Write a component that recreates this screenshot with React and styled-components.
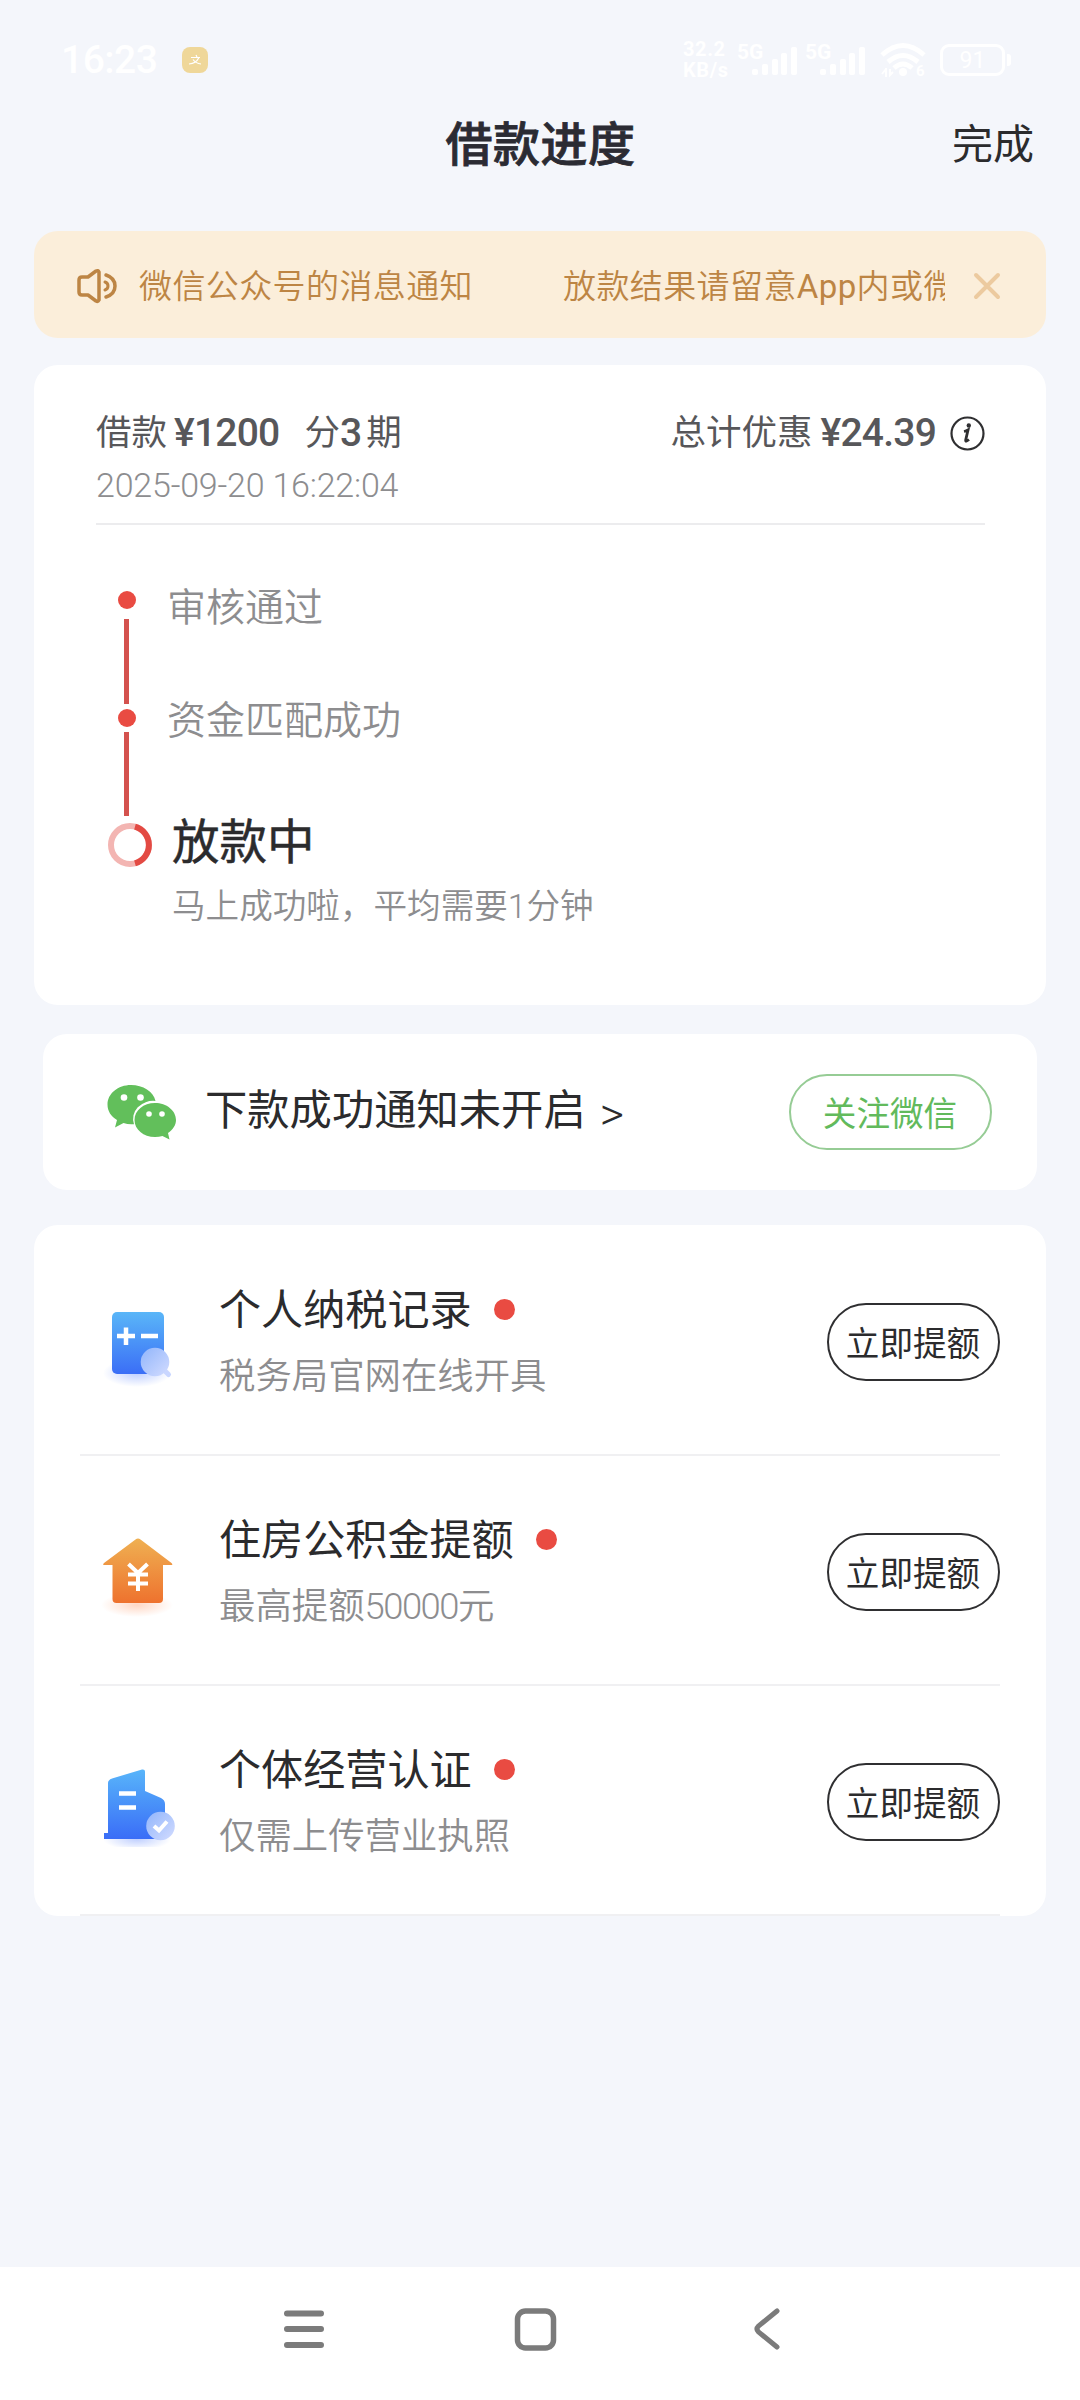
import styled, { createGlobalStyle } from "styled-components";

const GlobalStyle = createGlobalStyle`
  * {
    box-sizing: border-box;
  }

  body {
    margin: 0;
    background: #f4f6fb;
    font-family: Roboto, "Noto Sans CJK SC", sans-serif;
    color: #2b2b2d;
  }
`;

// ========== PAGE ==========
const Page = styled.div`
  width: 1080px;
  height: 2400px;
  display: flex;
  flex-direction: column;
  overflow: hidden;
`;

const Content = styled.main`
  flex: 1;
  padding: 0 34px;
`;

// ========== STATUS BAR ==========
const StatusBar = styled.div`
  height: 104px;
  padding: 16px 69px 0 61px;
  display: flex;
  align-items: center;
  justify-content: space-between;
  color: #ffffff;
`;

const StatusGroup = styled.div`
  display: flex;
  align-items: center;
`;

const Time = styled.span`
  width: 121px;
  font-size: 39px;
  font-weight: 500;
  letter-spacing: -0.5px;
`;

const Speed = styled.div`
  width: 54px;
  display: flex;
  flex-direction: column;
  font-size: 20px;
  font-weight: 700;
  letter-spacing: 0.6px;
  line-height: 21px;
`;

const Signal = styled.div`
  width: ${({ $width }) => $width}px;
  height: 34px;
  display: flex;
  align-items: flex-start;
  font-size: 21px;
  font-weight: 700;
  line-height: 18px;

  svg {
    margin: 4px 0 0 -11px;
  }
`;

const WifiIcon = styled.svg`
  overflow: visible;
`;

const Battery = styled.div`
  width: 65px;
  height: 32px;
  margin-left: 14px;
  border: 3px solid #ffffff;
  border-radius: 9px;
  font-size: 23px;
  line-height: 27px;
  text-align: center;
`;

const BatteryTip = styled.span`
  width: 4px;
  height: 12px;
  margin-left: 2px;
  border-radius: 0 3px 3px 0;
  background: #ffffff;
`;

// ========== HEADER ==========
const Header = styled.header`
  height: 127px;
  padding: 13px 46px 0 45px;
  display: grid;
  grid-template-columns: 1fr auto 1fr;
  align-items: start;
  line-height: 56px;

  h1 {
    margin: 0 -2px 0 0;
    font-size: 47px;
    font-weight: 500;
    letter-spacing: 0.5px;
    -webkit-text-stroke: 0.8px #2b2b33;
    color: #2b2b33;
  }
`;

const DoneLink = styled.span`
  justify-self: end;
  font-size: 41px;
`;

// ========== NOTICE ==========
const Notice = styled.section`
  height: 107px;
  padding: 3px 45px 0 42px;
  display: flex;
  align-items: center;
  border-radius: 24px;
  background: #fbeeda;
  color: #bd8544;
`;

const Marquee = styled.div`
  width: 806px;
  margin: 0 auto 0 21px;
  padding-top: 2px;
  display: flex;
  gap: 90px;
  overflow: hidden;
  white-space: nowrap;
  font-size: 33px;
  font-weight: 350;
  letter-spacing: 0.4px;
  line-height: 48px;

  em {
    font-style: normal;
    font-weight: 400;
  }
`;

// ========== CARDS ==========
const Card = styled.section`
  border-radius: 24px;
  background: #ffffff;
`;

const ProgressCard = styled(Card)`
  height: 640px;
  margin-top: 27px;
  padding: 42px 61px 0 62px;
`;

const Summary = styled.div`
  display: flex;
  justify-content: space-between;
  font-size: 35.5px;
  line-height: 52px;
  color: #57575a;
`;

const SummaryItem = styled.div`
  display: flex;
  align-items: center;
  white-space: pre;
`;

const Num = styled.b`
  margin: 0 ${({ $right }) => $right || 0}px 0 ${({ $left }) => $left || 0}px;
  font-size: 39px;
  font-weight: 500;
  letter-spacing: -0.8px;
`;

const LoanDate = styled.div`
  height: 66px;
  padding-top: 6px;
  border-bottom: 2px solid #ececee;
  font-size: 34px;
  font-weight: 300;
  letter-spacing: -0.2px;
  line-height: 40px;
  color: #8d8d8f;
`;

// ========== TIMELINE ==========
const Timeline = styled.div`
  padding-top: 66px;
`;

const Step = styled.div`
  display: grid;
  grid-template-columns: 61px 1fr;
  column-gap: 10px;
`;

const Rail = styled.div`
  display: flex;
  flex-direction: column;
  align-items: center;
`;

const Dot = styled.span`
  width: ${({ $size }) => $size}px;
  height: ${({ $size }) => $size}px;
  border-radius: 50%;
  background: #e94b42;
`;

const Line = styled.span`
  width: 5px;
  height: ${({ $height }) => $height}px;
  margin: ${({ $top }) => $top}px 0 ${({ $bottom }) => $bottom}px;
  background: #d4524e;
`;

const Ring = styled.svg`
  margin-left: 6px;
`;

const StepLabel = styled.div`
  margin-top: ${({ $shift }) => $shift}px;
  font-size: 39px;
  line-height: 48px;
  font-weight: 350;
  color: #8d8d8f;
`;

const CurrentStep = styled.div`
  margin: -8px 0 0 5px;

  strong {
    display: block;
    font-size: 47.5px;
    font-weight: 400;
    line-height: 56px;
    -webkit-text-stroke: 0.5px #2b2b2d;
  }

  p {
    margin: 14px 0 0;
    font-size: 33.6px;
    font-weight: 350;
    line-height: 44px;
    color: #8d8d8f;
  }
`;

// ========== WECHAT ==========
const WechatCard = styled(Card)`
  height: 156px;
  margin: 29px 9px 35px;
  padding: 0 45px 0 64px;
  display: flex;
  align-items: center;
`;

const WechatText = styled.div`
  margin-left: 28px;
  flex: 1;
  display: flex;
  font-size: 42.3px;
  line-height: 58px;

  span {
    margin-left: 14px;
    padding-top: 3px;
    font-size: 47px;
    font-weight: 300;
  }
`;

const Pill = styled.button`
  width: ${({ $green }) => ($green ? 203 : 173)}px;
  height: ${({ $green }) => ($green ? 76 : 78)}px;
  padding: 0 1px 1px 0;
  border: 2px solid ${({ $green }) => ($green ? "#96cc95" : "#2f2f31")};
  border-radius: 39px;
  background: transparent;
  font-family: inherit;
  font-size: 33.6px;
  color: ${({ $green }) => ($green ? "#62ba5c" : "#2b2b2d")};
`;

// ========== OFFERS ==========
const Offers = styled(Card)`
  height: 691px;
  padding-top: 1px;
`;

const Offer = styled.div`
  height: 230px;
  margin: 0 46px;
  padding: 3px 0 0 20px;
  display: flex;
  align-items: center;
  border-bottom: 2px solid #f0f0f2;
`;

const OfferText = styled.div`
  flex: 1;
  margin-left: 39px;

  h3 {
    margin: 0;
    display: flex;
    align-items: center;
    gap: 22px;
    font-size: 42.1px;
    font-weight: 400;
    line-height: 56px;
  }

  h3 ${Dot} {
    margin-top: -2px;
  }

  p {
    margin: 14px 0 0;
    font-size: 36.4px;
    font-weight: 350;
    line-height: 48px;
    color: #8d8d8f;
  }
`;

const Amount = styled.span`
  letter-spacing: -1.5px;
`;

// ========== NAVIGATION ==========
const NavBar = styled.nav`
  height: 133px;
  padding: 36px 296px 0 279px;
  display: grid;
  grid-template-columns: 228px 1fr auto;
  align-items: start;
  background: #ffffff;
`;

// ========== ICONS ==========
const SignalBars = () => (
  <svg width="46" height="28" viewBox="0 0 46 28" fill="#fff">
    <rect x="0" y="22" width="6" height="6" rx="2" />
    <rect x="10" y="17" width="6" height="11" rx="2" />
    <rect x="20" y="12" width="6" height="16" rx="2" />
    <rect x="29" y="6" width="6" height="22" rx="2" />
    <rect x="39" y="0" width="6" height="28" rx="2" />
  </svg>
);

const AppBadge = () => (
  <svg width="26" height="26" viewBox="0 0 26 26">
    <rect width="26" height="26" rx="8" fill="#efd799" />
    <path d="M9 10.500h9M14 8l1 2M17 10.500q-3 6-10 6.500M11 12.500q3 4 8 4.500" stroke="#fff" strokeWidth="1.200" fill="none" />
  </svg>
);

const Wifi = () => (
  <WifiIcon width="46" height="36" viewBox="0 0 46 36" fill="none" stroke="#fff" strokeWidth="5">
    <path d="M2 13q21-19 42 0" />
    <path d="M8 20q15-13 30 0" />
    <path d="M14 26q9-8 18 0" />
    <circle cx="23" cy="30" r="4" fill="#fff" stroke="none" />
    <path d="M6 26v9M2 32l4-5M10 27v6l3-3" strokeWidth="2" />
    <text x="36" y="34" fontSize="15" fontWeight="700" fill="#fff" stroke="none">6</text>
  </WifiIcon>
);

const Speaker = () => (
  <svg width="42" height="36" viewBox="0 0 42 36" fill="none" stroke="#bd8544" strokeWidth="3.500" strokeLinejoin="round" strokeLinecap="round">
    <path d="M6 9h6l8-6q2-1 3 1v28q-1 2-3 1l-8-6H6q-3 0-3-3V12q0-3 3-3z" />
    <path d="M30 7q9 3 9 11t-9 11" />
    <path d="M29 14q3 1 3 4t-3 4" strokeWidth="3" />
  </svg>
);

const Close = () => (
  <svg width="28" height="28" viewBox="0 0 28 28" stroke="#ecca9f" strokeWidth="4" strokeLinecap="round">
    <path d="M3 3l22 22M25 3L3 25" />
  </svg>
);

const Info = () => (
  <svg width="35" height="35" viewBox="0 0 35 35">
    <circle cx="17.500" cy="17.500" r="16" fill="none" stroke="#2f2f31" strokeWidth="2.200" />
    <circle cx="18.800" cy="9.500" r="2.200" fill="#2f2f31" />
    <path d="M14 15.500q2.500-.5 4-1.500l-2.300 10q-.3 2.500 3.300-.5" fill="none" stroke="#2f2f31" strokeWidth="2.800" />
  </svg>
);

const Wechat = () => (
  <svg width="70" height="56" viewBox="0 0 70 56" fill="#62bf5b">
    <path d="M24 1C11 1 .5 9.600.5 20.500c0 6.500 3.500 12 9.500 15.500L8 43.500l8.500-4.500q5 1.800 10.500 1.200A20 18 0 0 1 48.500 17C46.500 7.500 36 1 24 1z" />
    <path d="M48 19C36.500 19 27.500 26.500 27.500 36S36.500 53 48 53q4 0 7.500-1l7 3.500-1.500-6.500c5-3.500 8-8 8-13 0-9.500-9.500-17-21-17z" />
    <g fill="#fff">
      <circle cx="17" cy="13.500" r="3.300" />
      <circle cx="33.500" cy="13.500" r="3.300" />
      <circle cx="42" cy="30" r="2.800" />
      <circle cx="55" cy="30" r="2.800" />
    </g>
  </svg>
);

const Shade = ({ id, from, to, shadow }) => (
  <defs>
    <linearGradient id={id} x1="0" y1="0" x2="0" y2="1">
      <stop offset="0" stopColor={from} />
      <stop offset="1" stopColor={to} />
    </linearGradient>
    <radialGradient id={`${id}Shadow`}>
      <stop offset="0" stopColor={shadow} stopOpacity="0.500" />
      <stop offset="1" stopColor={shadow} stopOpacity="0" />
    </radialGradient>
    <linearGradient id={`${id}Glass`} x1="0" y1="0" x2="1" y2="1">
      <stop offset="0" stopColor="#91b5fb" />
      <stop offset="1" stopColor="#d3dcff" />
    </linearGradient>
  </defs>
);

const TaxIcon = () => (
  <svg width="80" height="90" viewBox="0 0 80 90">
    <Shade id="tax" from="#5ab6f8" to="#3b6ef6" shadow="#7f9fff" />
    <ellipse cx="37" cy="76" rx="34" ry="14" fill="url(#taxShadow)" />
    <rect x="12" y="15" width="52" height="62" rx="5" fill="url(#tax)" />
    <path d="M17 39h18M26 30.500v17.500M41 39h17" stroke="#fff" strokeWidth="4.500" />
    <path d="M64 73l4.500 4.500" stroke="#c9d6ff" strokeWidth="5" strokeLinecap="round" />
    <circle cx="55" cy="65" r="14.300" fill="url(#taxGlass)" />
  </svg>
);

const HouseIcon = () => (
  <svg width="80" height="90" viewBox="0 0 80 90">
    <Shade id="house" from="#efb052" to="#ee722e" shadow="#ffb08a" />
    <ellipse cx="37" cy="78" rx="36" ry="12" fill="url(#houseShadow)" />
    <path d="M35.500 12.500q2.500-2 5 0L71.500 36q2 2-.5 2h-8v34q0 4-4 4H16.500q-4 0-4-4V38h-8q-2.500 0-.5-2z" fill="url(#house)" />
    <path d="M28.500 37l9.500 9 9.500-9M38 45v19M28 47.500h20M28 56.500h20" stroke="#fff" strokeWidth="4" fill="none" />
  </svg>
);

const BusinessIcon = () => (
  <svg width="80" height="90" viewBox="0 -5 80 90">
    <Shade id="shop" from="#58b5fa" to="#3a6df7" shadow="#7f9fff" />
    <ellipse cx="37" cy="77" rx="34" ry="11" fill="url(#shopShadow)" />
    <path d="M8 21q0-3 4-4.500L42 7.500q3-.5 3 2V29l16 7q4 2 4 6v35H4v-6h4z" fill="url(#shop)" />
    <path d="M19 31.500h17M19 45.500h17" stroke="#fff" strokeWidth="4.500" />
    <circle cx="60.500" cy="64" r="14.300" fill="url(#shopGlass)" />
    <path d="M54 64l5 4.500 8-9" stroke="#fff" strokeWidth="4" fill="none" />
  </svg>
);

const offers = [
  { title: "个人纳税记录", desc: "税务局官网在线开具", Icon: TaxIcon },
  {
    title: "住房公积金提额",
    desc: (
      <>
        最高提额<Amount>50000</Amount>元
      </>
    ),
    Icon: HouseIcon,
  },
  { title: "个体经营认证", desc: "仅需上传营业执照", Icon: BusinessIcon },
];

export default function App() {
  return (
    <Page>
      <GlobalStyle />

      {/* STATUS BAR */}
      <StatusBar>
        <StatusGroup>
          <Time>16:23</Time>
          <AppBadge />
        </StatusGroup>
        <StatusGroup>
          <Speed>
            <span>32.2</span>
            <span>KB/s</span>
          </Speed>
          <Signal $width={68}>
            5G
            <SignalBars />
          </Signal>
          <Signal $width={75}>
            5G
            <SignalBars />
          </Signal>
          <Wifi />
          <Battery>91</Battery>
          <BatteryTip />
        </StatusGroup>
      </StatusBar>

      {/* HEADER */}
      <Header>
        <span />
        <h1>借款进度</h1>
        <DoneLink>完成</DoneLink>
      </Header>

      <Content>
        {/* NOTICE */}
        <Notice>
          <Speaker />
          <Marquee>
            <span>微信公众号的消息通知</span>
            <span>
              放款结果请留意<em>App</em>内或微信
            </span>
          </Marquee>
          <Close />
        </Notice>

        {/* PROGRESS */}
        <ProgressCard>
          <Summary>
            <SummaryItem>
              借款<Num $left={7} $right={25}>¥1200</Num>分<Num $left={0} $right={5}>3</Num>期
            </SummaryItem>
            <SummaryItem>
              总计优惠<Num $left={8} $right={14}>¥24.39</Num>
              <Info />
            </SummaryItem>
          </Summary>
          <LoanDate>2025-09-20 16:22:04</LoanDate>

          <Timeline>
            <Step>
              <Rail>
                <Dot $size={18} />
                <Line $top={10} $height={85} $bottom={5} />
              </Rail>
              <StepLabel $shift={-7}>审核通过</StepLabel>
            </Step>
            <Step>
              <Rail>
                <Dot $size={18} />
                <Line $top={5} $height={84} $bottom={7} />
              </Rail>
              <StepLabel $shift={-12}>资金匹配成功</StepLabel>
            </Step>
            <Step>
              <Rail>
                <Ring width="44" height="44" viewBox="0 0 44 44" fill="none" strokeWidth="6">
                  <circle cx="22" cy="22" r="19" stroke="#f3b5b2" />
                  <path d="M27 3.700a19 19 0 0 1 0 36.600" stroke="#e34a43" />
                </Ring>
              </Rail>
              <CurrentStep>
                <strong>放款中</strong>
                <p>马上成功啦，平均需要1分钟</p>
              </CurrentStep>
            </Step>
          </Timeline>
        </ProgressCard>

        {/* WECHAT */}
        <WechatCard>
          <Wechat />
          <WechatText>
            下款成功通知未开启<span>&gt;</span>
          </WechatText>
          <Pill $green>关注微信</Pill>
        </WechatCard>

        {/* OFFERS */}
        <Offers>
          {offers.map(({ title, desc, Icon }) => (
            <Offer key={title}>
              <Icon />
              <OfferText>
                <h3>
                  {title}
                  <Dot $size={21} />
                </h3>
                <p>{desc}</p>
              </OfferText>
              <Pill>立即提额</Pill>
            </Offer>
          ))}
        </Offers>
      </Content>

      {/* NAVIGATION */}
      <NavBar>
        <svg width="50" height="52" viewBox="0 0 50 52" stroke="#7b7b7b" strokeWidth="6" strokeLinecap="round">
          <path d="M8 10.500h34M8 26h34M8 42h34" />
        </svg>
        <svg width="50" height="52" viewBox="0 0 50 52" fill="none" stroke="#7b7b7b" strokeWidth="5.500">
          <rect x="10.500" y="8" width="36" height="37" rx="8" />
        </svg>
        <svg width="34" height="52" viewBox="0 0 34 52" fill="none" stroke="#7b7b7b" strokeWidth="5" strokeLinecap="round">
          <path d="M27 8L8.500 23q-3 3 0 6L27 44" />
        </svg>
      </NavBar>
    </Page>
  );
}
